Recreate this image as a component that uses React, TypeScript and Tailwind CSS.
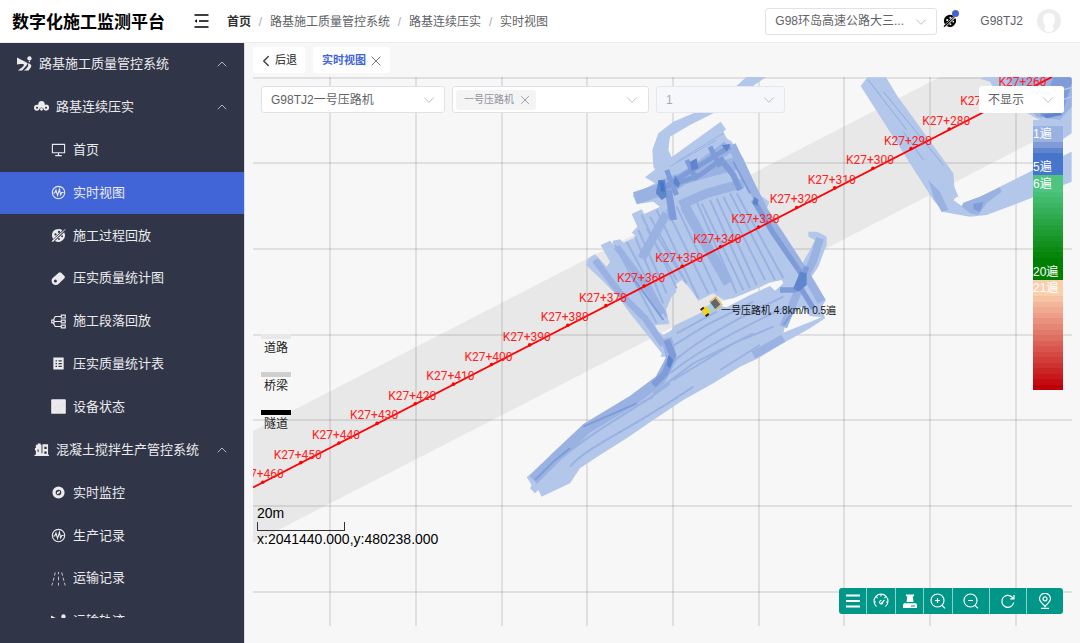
import type { ReactNode } from "react";
import { ChevronDown, ChevronLeft, ChevronUp, X } from "lucide-react";

type IconName =
  | "road"
  | "cloud"
  | "monitor"
  | "pulse"
  | "palette"
  | "tag"
  | "tree"
  | "sheet"
  | "device"
  | "plant"
  | "disc"
  | "lane";

type MenuItem = { label: string; icon: IconName; level: 1 | 2 | 3; group?: boolean; active?: boolean };

const MENU: MenuItem[] = [
  { label: "路基施工质量管控系统", icon: "road", level: 1, group: true },
  { label: "路基连续压实", icon: "cloud", level: 2, group: true },
  { label: "首页", icon: "monitor", level: 3 },
  { label: "实时视图", icon: "pulse", level: 3, active: true },
  { label: "施工过程回放", icon: "palette", level: 3 },
  { label: "压实质量统计图", icon: "tag", level: 3 },
  { label: "施工段落回放", icon: "tree", level: 3 },
  { label: "压实质量统计表", icon: "sheet", level: 3 },
  { label: "设备状态", icon: "device", level: 3 },
  { label: "混凝土搅拌生产管控系统", icon: "plant", level: 2, group: true },
  { label: "实时监控", icon: "disc", level: 3 },
  { label: "生产记录", icon: "pulse", level: 3 },
  { label: "运输记录", icon: "lane", level: 3 },
  { label: "运输轨迹", icon: "road", level: 3 },
];

const INDENT = { 1: "pl-[17px]", 2: "pl-[34px]", 3: "pl-[51px]" };

const CRUMBS = ["首页", "路基施工质量管控系统", "路基连续压实", "实时视图"];

const line = { fill: "none", stroke: "currentColor", strokeWidth: 1.2 };

const ICONS: Record<IconName, ReactNode> = {
  road: (
    <>
      <path d="M0 1.500 4.500 4 9 6 7.500 8.500 3.500 8.500 0 9z" />
      <circle cx="13.300" cy="2.600" r="2.300" />
      <path d="M12.300 5h2l-1 2.200z" />
      <path d="M8.500 6.500c4 .6 2.600 3.200.4 5L5.500 15.500H.8C5 12.500 8.800 10.500 6.800 8.600z" />
      <path d="M11 7.500c4.500 1 5 3 3.500 5l-2.200 3H7.500c4-3 5.800-5.500 3.500-8z" />
    </>
  ),
  cloud: (
    <>
      <path d="M4.500 6C4.500 3 6 2 8 2s3.500 1 3.500 4L10.500 8h-5z" />
      <path
        fillRule="evenodd"
        d="M3.200 6a3.200 3.200 0 1 0 0 6.400 3.200 3.200 0 0 0 3-2.600L8 9l1.800.8a3.200 3.200 0 1 0 3-3.800L10 6H6zM3.200 8.200a1.100 1.100 0 1 1 0 2.200 1.100 1.100 0 0 1 0-2.200m9.600 0a1.100 1.100 0 1 1 0 2.200 1.100 1.100 0 0 1 0-2.200"
      />
      <circle cx="8" cy="11" r="1.500" />
    </>
  ),
  monitor: <path {...line} d="M1.500 2.500h13v9h-13zM8 11.500v2.800M4.500 14.500h7" />,
  pulse: (
    <>
      <circle {...line} cx="8" cy="8" r="6.600" />
      <path {...line} d="M2.500 8.500H4l1.300-3 1.700 5.500 2-6.500 1.300 6 1.200-2.500h2" />
    </>
  ),
  palette: (
    <>
      <path
        fillRule="evenodd"
        d="M12.300 2.500 2.300 11.700A7 7 0 0 1 1 8a7 7 0 0 1 11.300-5.500M4.800 5.600a1.200 1.200 0 1 0 0 2.400 1.200 1.200 0 0 0 0-2.400M8.500 3a1.200 1.200 0 1 0 0 2.400A1.200 1.200 0 0 0 8.500 3"
      />
      <path
        fillRule="evenodd"
        d="M14 4.500A7 7 0 0 1 4.200 13.800zM11.800 7.800a1 1 0 1 0 0 2 1 1 0 0 0 0-2M8.500 10.700a1 1 0 1 0 0 2 1 1 0 0 0 0-2"
      />
      <path d="M15.200 1 15.500 1.500 6.500 10.500 2.500 14.300.7 15 1.300 13.200 5.500 9.500z" />
    </>
  ),
  tag: (
    <path
      fillRule="evenodd"
      d="M8.200 1.800Q9.500.8 10.800 1.800l3.500 3.500q1 1.300 0 2.500l-6 5.700a4.400 4.400 0 0 1-6.500-6zM4.700 9a1.600 1.600 0 1 0 0 3.200 1.600 1.600 0 0 0 0-3.200"
    />
  ),
  tree: (
    <path
      {...line}
      d="M.8 6.500h2.400v3H.8zM11 1.200h4.200v3H11zM11 6.500h4.200v3H11zM11 11.800h4.200v3H11zM3.200 8H11M2.500 6.500 4.500 2.700H11M2.500 9.500l2 3.800H11"
    />
  ),
  sheet: (
    <path
      fillRule="evenodd"
      d="M2.500 1.500h11v13h-11zM4.800 4.500v1.300h1.600V4.500zm0 3v1.200h1.600V7.500zm0 3v1.200h1.600v-1.200zM8 4.500v1.300h3.500V4.500zm0 3v1.200h3.500V7.500zm0 3v1.200h3.500v-1.200z"
    />
  ),
  device: (
    <>
      <rect x=".2" y=".2" width="15.600" height="15.600" rx="1" />
      <circle cx="7" cy="10" r="3" fill="none" stroke="#dcdce0" strokeWidth=".7" />
      <circle cx="12" cy="6" r="1.500" fill="none" stroke="#dcdce0" strokeWidth=".7" />
    </>
  ),
  plant: (
    <path
      fillRule="evenodd"
      d="M2 3h2V1.500h3V3h1v9h1V2.500h6v11h1V15H.5v-1.500H2V9H1V6.500h1zM3.800 8v2.500H5V8zM11 5v2.500h2.500V5zm0 5v2.500h2.500V10z"
    />
  ),
  disc: (
    <path
      fillRule="evenodd"
      d="M8 1.500a6.500 6.500 0 1 0 0 13 6.500 6.500 0 0 0 0-13M8 5a3 3 0 1 1 0 6 3 3 0 0 1 0-6m1.600 1L6.500 7.500 6.200 10l3.200-1.600z"
    />
  ),
  lane: (
    <path
      {...line}
      strokeWidth=".8"
      d="M4.500 1.500 3.700 5M3.200 7 2.300 10.500M1.800 12.500.8 15.500M11.500 1.500l.8 3.500M12.800 7l.9 3.500M14.200 12.500l1 3M8 1v2.500M8 6v4M8 12.500v3"
    />
  ),
};

function Icon({ name, className = "size-[15px]" }: { name: IconName; className?: string }) {
  return (
    <svg viewBox="0 0 16 16" fill="currentColor" aria-hidden="true" className={`${className} shrink-0`}>
      {ICONS[name]}
    </svg>
  );
}

function Sidebar() {
  return (
    <nav className="w-[244px] shrink-0 bg-[#303548]" aria-label="主菜单">
      <div className="h-[575px] max-h-full overflow-hidden">
        <ul className="grid h-[600px] auto-rows-fr">
          {MENU.map((item) => (
            <li key={item.label}>
              <a
                href="#"
                className={`flex h-full items-center gap-[7px] pr-[14px] pb-px text-[13px] text-[#ebebed] ${INDENT[item.level]} ${
                  item.active ? "bg-[#4165d7]" : ""
                }`}
              >
                <Icon name={item.icon} />
                <span className="flex-1 whitespace-nowrap">{item.label}</span>
                {item.group && <ChevronUp className="size-4 text-[#b4b6be]" strokeWidth={1.5} />}
              </a>
            </li>
          ))}
        </ul>
      </div>
    </nav>
  );
}

type SelectProps = { label: string; value: string; box: string; field?: string; disabled?: boolean };

function Select({ label, value, box, field = "border border-[#dfe2ea] bg-white text-[#606266]", disabled }: SelectProps) {
  return (
    <div className={`relative h-[27px] ${box}`}>
      <select
        aria-label={label}
        disabled={disabled}
        className={`size-full appearance-none rounded-[3px] pr-6 pl-[9px] text-[12px] opacity-100 ${field}`}
      >
        <option>{value}</option>
      </select>
      <ChevronDown
        className="pointer-events-none absolute top-[5px] right-[7px] size-[18px] text-[#b5b8bf]"
        strokeWidth={1.2}
      />
    </div>
  );
}

function Header() {
  return (
    <header className="flex h-[43px] shrink-0 items-center border-b border-[#ededed] bg-white pr-[19px] pl-3">
      <h1 className="pt-[3px] text-[17px] font-bold whitespace-nowrap text-black">数字化施工监测平台</h1>
      <button type="button" aria-label="收起菜单" className="ml-[29px]">
        <svg viewBox="0 0 15 14" className="h-[14px] w-[15px]" fill="none" stroke="#000" strokeWidth="1.500">
          <path d="M.5 1h14M5 7h9.500M.5 13h14" />
          <path d="M3 5.200v3.600L.5 7z" fill="#000" stroke="none" />
        </svg>
      </button>
      <ol className="ml-[18px] flex items-center pt-[2px] text-[12px] whitespace-nowrap text-[#606266]">
        {CRUMBS.map((crumb, i) => (
          <li key={crumb} className="flex items-center">
            {i > 0 && <span className="w-[19px] text-center text-[#a8abb2]">/</span>}
            <a href="#" className={i === 0 ? "font-bold text-[#303133]" : ""}>
              {crumb}
            </a>
          </li>
        ))}
      </ol>
      <div className="ml-auto flex items-center">
        <Select label="项目" value="G98环岛高速公路大三..." box="w-[172px]" />
        <button type="button" aria-label="主题" className="relative ml-[6px] text-black">
          <Icon name="palette" className="size-[14px]" />
          <span className="absolute -top-[4px] -right-[2px] size-[7px] rounded-full bg-[#4165d7]" />
        </button>
        <span className="ml-[23px] text-[12px] text-[#606266]">G98TJ2</span>
        <svg viewBox="0 0 24 24" className="ml-[14px] size-[24px]" role="img" aria-label="头像">
          <circle cx="12" cy="12" r="12" fill="#ececec" />
          <path
            fill="#fff"
            d="M12 4c4 0 6 3 6 6.500 0 3-1.500 4.800-2 6-.3 1.500.2 2.500 1 3.500C15 24 9.500 24.500 7 20c.8-1 1.300-2 1-3.500-.5-1.200-2-3-2-6C6 7 8 4 12 4"
          />
        </svg>
      </div>
    </header>
  );
}

// grid spacing on the canvas
const GRID_X = [330, 416, 502, 587, 673, 759, 844, 930, 1016];
const GRID_Y = [78, 163, 249, 335, 420, 506, 592];

// stake marks every 10 m, from K27+460 back to K27+260
const STAKES = Array.from({ length: 21 }, (_, i) => ({
  name: `K27+${460 - i * 10}`,
  x: 262.7 + i * 38.14,
  y: 482.3 - i * 19.63,
}));

const BODY =
  "M20 742 100 668 180 595 215 575 280 545 345 495 390 465 425 425 437 380 422 380 425 370 370 300 330 250 290 195 240 145 197 105 205 85 225 72 260 110 270 95 242 45 270 32 280 42 278 32 300 28 310 38 340 25 350 32 345 15 335 8 352 -10 335 -48 365 -62 373 -48 420 -70 400 -85 350 -78 338 -105 405 -140 375 -158 410 -185 460 -222 602 -325 618 -302 610 -295 620 -275 635 -265 670 -215 695 -160 710 -112 748 -85 740 -62 730 -60 760 0 800 50 845 103 870 60 885 30 865 20 865 5 892 5 920 20 920 45 910 70 895 110 872 145 918 210 905 230 915 265 870 295 780 345 715 385 660 410 580 460 490 510 400 570 320 625 240 675 180 715 150 760 65 800 55 780 45 790 30 775 35 765z";
const HOLES =
  "M405 285 448 282 438 240 455 200 470 185 465 165 485 150 505 170 520 190 535 212 580 190 600 203 612 210 640 205 720 172 748 158 785 150 790 160 765 182 750 168 690 195 620 232 590 225 460 288 455 300 430 315 415 305zM845 230 870 258 905 262 790 308 800 270z";

const SECOND_PASS = [
  "M410 -60 535 205M440 -62 565 190M470 -70 590 185M530 -85 650 190M545 -80 670 180M570 -90 690 175M590 -95 710 165M610 -100 735 150M630 -110 765 150M650 -110 790 145",
  "M390 -40 500 160M365 -45 470 175M355 0 440 190M345 20 430 220M320 35 440 260M285 45 410 280M380 -5 470 150M400 0 490 145",
  "M455 400C520 340 640 270 790 200M450 430C530 365 650 300 800 230M455 350 560 285 700 215M470 310 590 245M460 450 640 340 760 290M400 490 520 400 700 310M600 420 720 345",
  "M150 710C200 650 330 600 520 470M130 680C220 600 330 550 450 460M110 690C180 640 290 560 400 500",
];

function RollerTracks() {
  return (
    <g transform="translate(520 230) scale(.33333)" fill="none">
      <path
        d="M680 -460 740 -460 580 -350 510 -315 450 -280 445 -240 455 -218 480 -210 420 -160 400 -190 397 -240 415 -290 460 -325 520 -350 650 -433z"
        fill="#b3c7eb"
      />
      <path d={BODY + HOLES} fill="#b3c7eb" fillRule="evenodd" />
      <g stroke="#9ab2e2">
        {SECOND_PASS.map((d) => (
          <path key={d} d={d} strokeWidth="6" />
        ))}
        <path d="M225 90 300 190 375 265 430 345M290 50 350 130 430 250" strokeWidth="20" />
        <path d="M495 -70 550 30 625 160" strokeWidth="30" />
        <path d="M440 -50 365 85" strokeWidth="26" />
        <path d="M345 -95 450 -130 530 -180 625 -250M420 -130 520 -165 650 -200" strokeWidth="38" />
        <path d="M480 -75 560 -110 670 -140" strokeWidth="28" />
        <path d="M635 -255 685 -150 730 -60 870 155 905 215" strokeWidth="26" />
        <path d="M900 25 880 90 840 170 790 290" strokeWidth="24" />
        <path d="M440 325 455 385 420 450 340 510 200 595 110 680 40 750" strokeWidth="32" />
        <path d="M700 375 790 325" strokeWidth="24" />
        <path d="M470 -205 610 -290M450 -190 590 -270" strokeWidth="3" />
      </g>
      <g stroke="#7f9cd8">
        <path d="M410 -115 500 -170 630 -250M430 -125 540 -165 610 -215M440 -180 470 -105M500 -210 530 -150M570 -250 600 -190" strokeWidth="15" />
        <path d="M600 -215 640 -165 660 -120" strokeWidth="18" />
        <path d="M445 -120 460 -30" strokeWidth="22" />
        <path d="M700 -90 760 10 850 140M860 110 840 170 880 235M780 180H830" strokeWidth="16" />
        <path d="M440 330 458 375 435 430 400 465" strokeWidth="20" />
        <path d="M45 750 100 695 150 655M190 590 350 520M640 -205 690 -110M330 130 430 270M790 285 820 245" strokeWidth="6" />
      </g>
      <g fill="#6085cd">
        <path d="M415 -150 435 -150 440 -100 425 -90 408 -110zM510 -205 530 -215 535 -185 515 -178zM605 -255 632 -258 620 -235zM702 -100 716 -90 712 -72 698 -78z" />
        <path d="M840 125 860 130 860 165 835 185 820 175zM445 375 460 390 450 415 440 405zM465 -165 480 -140 475 -125 460 -140z" />
      </g>
      <path d="M418 -145h12l5 30h-12z" fill="#4775cc" />
      <path d="M425 -116h5v5h-5z" fill="#2fae68" />
    </g>
  );
}

function ReturnTracks() {
  return (
    <g transform="translate(740 0) scale(.33333)">
      <path
        fill="#b3c7eb"
        d="M362 258 382 232H438L470 285 640 520 643 560 655 590 662 612 720 590 880 510 995 455V545L880 592 740 645 690 650 610 636 580 600z"
      />
      <path fill="#f7f7f7" d="M650 590 685 602 665 618 640 600z" />
      <path fill="#b3c7eb" d="M720 236 745 228H995V400L950 430 920 370 880 350 770 280 750 245z" />
      <path fill="#9ab2e2" d="M670 608 720 590 780 562 785 575 740 610 715 645 690 640 665 620zM565 540 600 575 625 630 605 636 580 590zM800 232H995V320L960 360 890 350z" />
      <path fill="#7f9cd8" d="M700 612 730 606 720 636 700 628zM940 232H995V250L970 330 900 350 910 310z" />
      <path fill="none" stroke="#7f9cd8" strokeWidth="2" d="M385 240 500 390M430 275 610 495M490 395 550 480" />
      <path fill="none" stroke="#b3c7eb" strokeWidth="4" d="M968 270 995 262M968 300 995 290" />
      <path fill="#6085cd" d="M905 345 965 335V345L920 355z" />
    </g>
  );
}

function MapCanvas() {
  return (
    <svg
      viewBox="253 77 819 549"
      preserveAspectRatio="xMinYMin slice"
      className="absolute inset-0 size-full"
      role="img"
      aria-label="压实轨迹"
    >
      <path d="M253 431 940 77H1072V122L253 543z" fill="#e8e8e8" />
      <g stroke="#000" strokeOpacity=".09" strokeWidth="2">
        {GRID_X.map((x) => (
          <path key={x} d={`M${x} 77V626`} />
        ))}
        {GRID_Y.map((y) => (
          <path key={y} d={`M253 ${y}H1072`} />
        ))}
      </g>
      <RollerTracks />
      <ReturnTracks />
      <path d="M253 487.500 1052 77" stroke="#f00" strokeWidth="1.800" />
      <g fill="#f22" fontSize="12" textAnchor="middle" fontFamily="Roboto, sans-serif">
        {STAKES.map((s) => (
          <g key={s.name}>
            <circle cx={s.x} cy={s.y} r="1.800" fill="#f00" />
            <text x={s.x - 3} y={s.y - 4}>
              {s.name}
            </text>
          </g>
        ))}
      </g>
      <g transform="translate(711 307) rotate(-38)">
        <path d="M-10-4h7v8h-7z" fill="#f5d21c" />
        <path d="M-10-5h4v2h-4zM-10 3h4v2h-4z" fill="#222" />
        <path d="M-3-3h5v6h-5z" fill="#9fd4ee" />
        <path d="M2-4h7V4H2z" fill="#666" />
        <path d="M2-5h8V5H2" fill="none" stroke="#e8ad3c" strokeWidth="1" />
      </g>
      <text x="721" y="314" fontSize="10" fill="#111">
        一号压路机 4.8km/h 0.5遍
      </text>
    </svg>
  );
}

type Rgb = [number, number, number];

const ramp = (from: Rgb, to: Rgb, t: number) =>
  `rgb(${from.map((c, i) => Math.round(c + (to[i] - c) * t)).join(" ")})`;

const GREEN: [Rgb, Rgb] = [[77, 197, 128], [0, 128, 0]];
const RED: [Rgb, Rgb] = [[249, 207, 174], [192, 0, 8]];

const PASSES: { size: number; color: string; label?: string }[] = [
  { size: 1, color: "#b3c7eb" },
  { size: 3, color: "#9ab2e2", label: "1遍" },
  { size: 1, color: "#7f9cd8" },
  { size: 1, color: "#6085cd" },
  { size: 4, color: "#4775cc", label: "5遍" },
  { size: 3, color: ramp(GREEN[0], GREEN[1], 0), label: "6遍" },
  ...Array.from({ length: 12 }, (_, i) => ({ size: 1, color: ramp(GREEN[0], GREEN[1], (i + 1) / 13) })),
  { size: 4, color: ramp(GREEN[0], GREEN[1], 1), label: "20遍" },
  { size: 3, color: ramp(RED[0], RED[1], 0), label: "21遍" },
  ...Array.from({ length: 17 }, (_, i) => ({ size: 1, color: ramp(RED[0], RED[1], (i + 1) / 17) })),
];

function PassScale() {
  return (
    <div className="absolute top-[43px] right-[9px] flex h-[270px] w-[30px] flex-col text-[12px] leading-[16px] text-white">
      {PASSES.map((p, i) => (
        <div
          key={i}
          className="flex min-h-0 basis-0 items-end whitespace-nowrap"
          style={{ flexGrow: p.size, backgroundColor: p.color }}
        >
          {p.label}
        </div>
      ))}
    </div>
  );
}

const LEGEND = [
  { label: "道路", bar: "bg-[#e8e8e8]" },
  { label: "桥梁", bar: "bg-[#cfcfcf]" },
  { label: "隧道", bar: "bg-black" },
];

const TOOLS = [
  { label: "菜单", width: "w-[28px]", d: "M1 2.500h14M1 8h14M1 13.500h14", weight: 2 },
  {
    label: "速度",
    width: "w-[29px]",
    d: "M3.500 13.500A7 7 0 1 1 12.500 13.500M8 1.500v2M3.500 4l1 1M1.500 9h1.500M12.500 4l-1 1M14.500 9H13M8.500 10.200l3-3.200M8.500 7.500a1.700 1.700 0 1 0 1.500 1.800",
    weight: 1.1,
  },
  { label: "压路机", width: "w-[28px]", solid: "M4 1.500h8v1.700h-1.300L11.500 9H4.500l.8-5.800H4zM2 10.300h12l1 1.500V15H1v-3.200zM9 12.500v1h4v-1z" },
  {
    label: "放大",
    width: "w-[29px]",
    d: "M7.500 1a6.500 6.500 0 1 0 0 13 6.500 6.500 0 0 0 0-13M12 12.300l3 3M7.500 5v5M5 7.500h5",
    weight: 1.2,
  },
  { label: "缩小", width: "w-[37px]", d: "M7.500 1a6.500 6.500 0 1 0 0 13 6.500 6.500 0 0 0 0-13M12 12.300l3 3M5 7.500h5", weight: 1.2 },
  { label: "刷新", width: "w-[37px]", d: "M13.700 9.500A6 6 0 1 1 12 4l2 1.700M14 2v3.800h-3.800", weight: 1.2 },
  {
    label: "定位",
    width: "w-[36px]",
    d: "M8 13.500C5.500 10.500 2.500 8.500 2.500 5.800a5.500 5.500 0 0 1 11 0C13.500 8.500 10.500 10.500 8 13.500zM8 3.800a2 2 0 1 0 0 4 2 2 0 0 0 0-4M4 15.300h8",
    weight: 1.2,
  },
];

function Toolbar() {
  return (
    <div className="absolute right-[9px] bottom-[12px] flex h-[26px] divide-x divide-[#8fd0ca] overflow-hidden rounded-[3px] bg-[#009688] text-white">
      {TOOLS.map((t) => (
        <button key={t.label} type="button" aria-label={t.label} className={`grid place-items-center ${t.width}`}>
          <svg viewBox="0 0 16 16" className="size-4" fill="none" stroke="currentColor" strokeWidth={t.weight}>
            {t.solid ? <path d={t.solid} fill="currentColor" fillRule="evenodd" stroke="none" /> : <path d={t.d} />}
          </svg>
        </button>
      ))}
    </div>
  );
}

function MapPanel() {
  return (
    <section className="relative mr-2 mb-[17px] ml-2 flex-1 overflow-hidden rounded-tr-[3px]">
      <MapCanvas />

      <div className="absolute inset-x-2 top-[9px] flex items-start">
        <Select label="设备" value="G98TJ2一号压路机" box="w-[184px]" />
        <div className="relative ml-[7px] flex h-[27px] w-[197px] items-center rounded-[3px] border border-[#dfe2ea] bg-white pl-[3px]">
          <span className="flex h-[20px] items-center gap-1 rounded-[3px] bg-[#f4f4f5] pr-1 pl-2 text-[10px] text-[#909399]">
            一号压路机
            <button type="button" aria-label="移除">
              <X className="size-[14px]" strokeWidth={1.5} />
            </button>
          </span>
          <ChevronDown className="absolute right-[7px] size-[18px] text-[#b5b8bf]" strokeWidth={1.2} />
        </div>
        <Select
          label="层数"
          value="1"
          box="ml-[7px] w-[129px]"
          field="border border-[#e4e7ed] bg-[#f5f7fa] text-[#a8abb2]"
          disabled
        />
        <Select label="显示" value="不显示" box="ml-auto w-[85px]" field="bg-white text-[#606266]" />
      </div>

      <PassScale />

      <ul className="absolute top-[257px] left-[8px] text-[12px] leading-[18px] text-[#222]">
        {LEGEND.map((l) => (
          <li key={l.label} className="h-[38px] w-[30px] text-center">
            <div className={`h-[5px] ${l.bar}`} />
            {l.label}
          </li>
        ))}
      </ul>

      <div className="absolute top-[428px] left-[4px] text-[14px] leading-[17px] whitespace-nowrap text-black">
        <p>20m</p>
        <div className="h-[9px] w-[88px] border border-t-0 border-[#333]" />
        <p>x:2041440.000,y:480238.000</p>
      </div>

      <Toolbar />
    </section>
  );
}

export default function App() {
  return (
    <div className="flex h-screen flex-col overflow-hidden bg-[#f7f7f7] font-['Liberation_Sans','Noto_Sans_CJK_SC',sans-serif]">
      <Header />
      <div className="flex min-h-0 flex-1">
        <Sidebar />
        <main className="flex min-w-0 flex-1 flex-col border-l border-[#dcdde0]">
          <div className="flex gap-2 px-2 py-1 text-[11px]">
            <button type="button" className="flex h-[26px] items-center rounded-[3px] bg-white pt-px pr-2 pl-1 text-[#222]">
              <ChevronLeft className="size-[18px] text-[#444]" strokeWidth={2} />
              后退
            </button>
            <div className="flex h-[26px] items-center gap-[2px] rounded-[3px] bg-white pt-px pr-[6px] pl-[9px]">
              <a href="#" className="font-bold text-[#4165d7]">
                实时视图
              </a>
              <button type="button" aria-label="关闭">
                <X className="size-4 text-[#777]" strokeWidth={1.5} />
              </button>
            </div>
          </div>
          <MapPanel />
        </main>
      </div>
    </div>
  );
}
